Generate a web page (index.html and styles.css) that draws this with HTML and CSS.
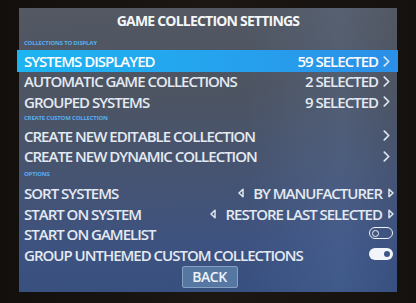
FILE: index.html
```html
<!DOCTYPE html>
<html>
<head>
<meta charset="utf-8">
<link rel="stylesheet" href="styles.css">
</head>
<body>
<div class="screen">
  <div class="title">GAME COLLECTION SETTINGS</div>

  <div class="label">COLLECTIONS TO DISPLAY</div>
  <div class="row selected">
    <span class="name">SYSTEMS DISPLAYED</span>
    <span class="value">59 SELECTED</span>
    <svg class="chev" viewBox="0 0 6 10"><polyline points="1,1 5,5 1,9"/></svg>
  </div>
  <div class="row">
    <span class="name">AUTOMATIC GAME COLLECTIONS</span>
    <span class="value">2 SELECTED</span>
    <svg class="chev" viewBox="0 0 6 10"><polyline points="1,1 5,5 1,9"/></svg>
  </div>
  <div class="row">
    <span class="name">GROUPED SYSTEMS</span>
    <span class="value">9 SELECTED</span>
    <svg class="chev" viewBox="0 0 6 10"><polyline points="1,1 5,5 1,9"/></svg>
  </div>

  <div class="label">CREATE CUSTOM COLLECTION</div>
  <div class="row">
    <span class="name">CREATE NEW EDITABLE COLLECTION</span>
    <svg class="chev" viewBox="0 0 6 10"><polyline points="1,1 5,5 1,9"/></svg>
  </div>
  <div class="row">
    <span class="name">CREATE NEW DYNAMIC COLLECTION</span>
    <svg class="chev" viewBox="0 0 6 10"><polyline points="1,1 5,5 1,9"/></svg>
  </div>

  <div class="label tall">OPTIONS</div>
  <div class="row">
    <span class="name">SORT SYSTEMS</span>
    <svg class="arrow left" viewBox="0 0 6 10"><polygon points="5,1.2 1,5 5,8.8"/></svg>
    <span class="value">BY MANUFACTURER</span>
    <svg class="arrow right" viewBox="0 0 6 10"><polygon points="1,1.2 5,5 1,8.8"/></svg>
  </div>
  <div class="row">
    <span class="name">START ON SYSTEM</span>
    <svg class="arrow left" viewBox="0 0 6 10"><polygon points="5,1.2 1,5 5,8.8"/></svg>
    <span class="value">RESTORE LAST SELECTED</span>
    <svg class="arrow right" viewBox="0 0 6 10"><polygon points="1,1.2 5,5 1,8.8"/></svg>
  </div>
  <div class="row">
    <span class="name">START ON GAMELIST</span>
    <span class="toggle off"><span class="knob"></span></span>
  </div>
  <div class="row">
    <span class="name">GROUP UNTHEMED CUSTOM COLLECTIONS</span>
    <span class="toggle on"><span class="knob"></span></span>
  </div>

  <div class="footer">
    <div class="button">BACK</div>
  </div>
</div>
</body>
</html>
```

FILE: styles.css
```css
html, body {
  margin: 0;
  padding: 0;
}

body {
  width: 416px;
  height: 303px;
  overflow: hidden;
  background: linear-gradient(90deg, #120f0d 0%, #1c1713 50%, #15110e 100%);
  font-family: "Open Sans", "Liberation Sans", sans-serif;
  color: #e4eaf2;
}

.screen {
  margin: 8px 0 0 19px;
  width: 378px;
  height: 284px;
  display: flex;
  flex-direction: column;
  background:
    linear-gradient(90deg, rgba(255,255,255,0) 60%, rgba(120,160,220,0.12) 85%, rgba(0,0,0,0) 100%),
    linear-gradient(178deg, #535862 0%, #4d5462 30%, #465472 58%, #3d5280 82%, #37507f 100%);
}

.title {
  line-height: 26px;
  padding-bottom: 2.75px;
  text-align: center;
  font-size: 14px;
  font-weight: 700;
  letter-spacing: -0.8px;
  color: #f4f6f8;
}

.label {
  height: 13.5px;
  line-height: 13.5px;
  padding-left: 5px;
  font-size: 6px;
  font-weight: 700;
  letter-spacing: -0.2px;
  color: #56aef0;
}

.label.tall {
  height: 16.5px;
  line-height: 16.5px;
}

.row {
  height: 20.5px;
  display: flex;
  align-items: center;
  padding: 0 7px 0 5px;
  font-size: 15px;
  font-weight: 600;
  letter-spacing: -1px;
  white-space: nowrap;
}

.row.selected {
  background: linear-gradient(90deg, #1db4f1 0%, #25a4ee 50%, #2b8fe7 100%);
  color: #ffffff;
  margin: 0 -1px 0 -2px;
  padding: 0 8px 0 7px;
  height: 21.5px;
  margin-bottom: -1px;
}

.name {
  flex: 1;
}

.value {
  margin-left: 8px;
}

.chev {
  width: 7px;
  height: 11px;
  margin-left: 5px;
  fill: none;
  stroke: #dfe7f1;
  stroke-width: 1.5;
  stroke-linecap: round;
  stroke-linejoin: round;
}

.arrow {
  width: 6px;
  height: 10px;
  fill: none;
  stroke: #dfe7f1;
  stroke-width: 1.5;
  stroke-linejoin: round;
}

.arrow.left {
  margin-right: 1px;
}

.arrow.right {
  margin-left: 6px;
  margin-right: -4px;
}

.toggle {
  width: 24px;
  height: 12px;
  box-sizing: border-box;
  border-radius: 6px;
  display: flex;
  align-items: center;
  margin-right: -3px;
  margin-bottom: 2px;
}

.toggle.off {
  border: 1.8px solid #eef2f7;
  padding-left: 1.5px;
}

.toggle.off .knob {
  width: 5px;
  height: 5px;
  border: 1.5px solid #eef2f7;
  border-radius: 50%;
}

.toggle.on {
  background: #f2f5f9;
  justify-content: flex-end;
  padding-right: 3px;
}

.toggle.on .knob {
  width: 6px;
  height: 6px;
  border-radius: 50%;
  background: #3b5687;
}

.footer {
  display: flex;
  justify-content: center;
  padding-top: 1.5px;
  padding-left: 3px;
}

.button {
  width: 56px;
  height: 21.5px;
  box-sizing: border-box;
  border: 1px solid #86a1c4;
  border-radius: 2px;
  background: #5777a3;
  text-align: center;
  line-height: 19.5px;
  font-size: 14px;
  font-weight: 600;
  letter-spacing: -0.5px;
  color: #eef3f9;
}
```
